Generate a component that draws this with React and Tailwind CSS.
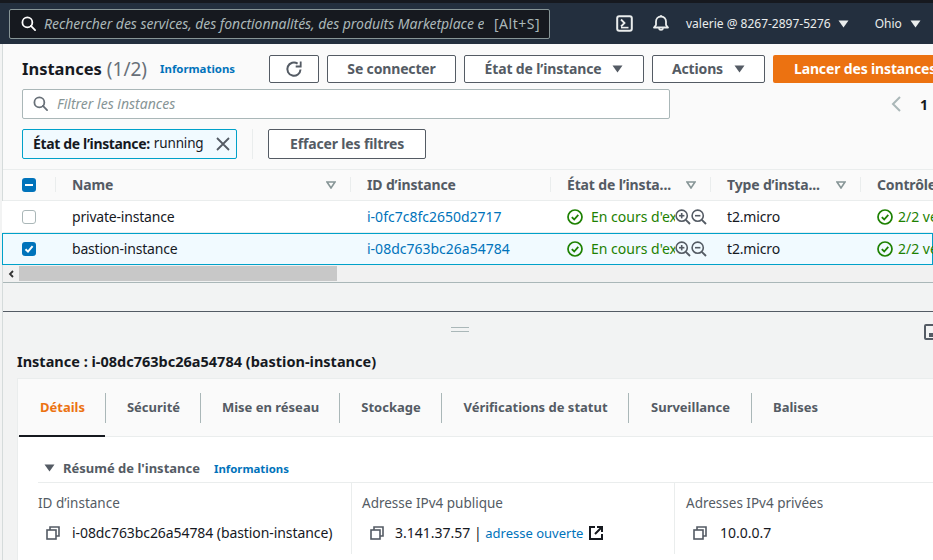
const F = { fontFamily: '"Noto Sans", sans-serif' };

function Caret({ className = "", color = "#545b64" }) {
  return (
    <svg width="11" height="8" viewBox="0 0 11 8" className={className}>
      <path d="M0.5 0.5h10L5.5 7.5z" fill={color} />
    </svg>
  );
}

function SortCaret() {
  return (
    <svg width="10" height="8" viewBox="0 0 10 8">
      <path d="M1 1h8L5 7z" fill="none" stroke="#879596" strokeWidth="1.6" />
    </svg>
  );
}

function Search({ size = 15, color = "#fff" }) {
  return (
    <svg width={size} height={size} viewBox="0 0 16 16" fill="none" stroke={color} strokeWidth="1.9">
      <circle cx="6.8" cy="6.8" r="5.3" />
      <path d="M10.6 10.6 15 15" strokeLinecap="round" />
    </svg>
  );
}

function Btn({ children, className = "" }) {
  return (
    <div className={`flex h-[28px] items-center justify-center rounded-[2px] border border-[#545b64] bg-white pb-px text-[14px] font-bold tracking-[-0.15px] text-[#545b64] ${className}`}>
      {children}
    </div>
  );
}

function CheckOk({ size = 16 }) {
  return (
    <svg width={size} height={size} viewBox="0 0 16 16" fill="none" stroke="#1d8102" strokeWidth="1.7" className="shrink-0">
      <circle cx="8" cy="8" r="7" />
      <path d="M4.8 8.2 7.2 10.5 11.3 5.9" strokeWidth="1.8" />
    </svg>
  );
}

function Zoom({ plus }) {
  return (
    <svg width="16" height="16" viewBox="0 0 16 16" fill="none" stroke="#545b64" strokeWidth="1.6" className="shrink-0">
      <circle cx="6.7" cy="6.7" r="5.6" />
      <path d="M10.8 10.8 15 15" strokeWidth="1.9" />
      <path d="M4 6.7h5.4" />
      {plus && <path d="M6.7 4v5.4" />}
    </svg>
  );
}

function Copy() {
  return (
    <svg width="14" height="14" viewBox="0 0 14 14" fill="none" stroke="#545b64" strokeWidth="1.6">
      <rect x="1" y="4" width="9" height="9" />
      <path d="M4 4V1h9v9h-3" />
    </svg>
  );
}

function Th({ w, label, sort, sep = true, pad = "pl-[16px]" }) {
  return (
    <div className={`relative flex h-full shrink-0 items-center justify-between pr-[15px] ${pad} ${w}`}>
      <span className="mb-[2px] whitespace-nowrap text-[14px] font-bold tracking-[-0.15px] text-[#545b64]">{label}</span>
      {sort && <SortCaret />}
      {sep && <span className="absolute right-0 top-[7px] h-[15px] w-px bg-[#eaeded]" />}
    </div>
  );
}

function Row({ selected, name, id }) {
  return (
    <div className={`-ml-px flex h-[32px] items-center border text-[14px] text-[#16191f] ${selected ? "border-[#00a1c9] bg-[#f1faff]" : "border-transparent border-b-[#eaeded] bg-white"}`}>
      <div className="flex w-[53px] shrink-0 items-center pl-[19px]">
        {selected ? (
          <span className="flex h-[14px] w-[14px] items-center justify-center rounded-[3px] bg-[#0073bb]">
            <svg width="10" height="10" viewBox="0 0 10 10" fill="none" stroke="#fff" strokeWidth="2"><path d="M1.5 5.2 4 7.6 8.6 2.2" /></svg>
          </span>
        ) : (
          <span className="h-[14px] w-[14px] rounded-[3px] border border-[#aab7b8] bg-white" />
        )}
      </div>
      <div className="mb-[2px] w-[295px] shrink-0 pl-[16px] tracking-[-0.2px]">{name}</div>
      <div className="mb-[2px] w-[200px] shrink-0 pl-[16px] text-[#0073bb]">{id}</div>
      <div className="flex w-[160px] shrink-0 items-center pl-[16px]">
        <CheckOk />
        <span className="mb-[2px] ml-[8px] w-[84px] shrink-0 overflow-hidden whitespace-nowrap text-[#1d8102]">En cours d'exécution</span>
        <Zoom plus />
        <Zoom />
      </div>
      <div className="mb-[2px] w-[150px] shrink-0 pl-[16px] tracking-[-0.15px]">t2.micro</div>
      <div className="flex shrink-0 items-center whitespace-nowrap pl-[16px] text-[#1d8102]">
        <CheckOk />
        <span className="mb-[2px] ml-[5px]">2/2 vérifications</span>
      </div>
    </div>
  );
}

function Tab({ children, active, sep = true, w }) {
  return (
    <div className={`relative flex h-full shrink-0 items-center justify-center text-[13px] font-bold ${w} ${active ? "text-[#ec7211]" : "text-[#545b64]"}`}>
      {children}
      {sep && <span className="absolute right-0 top-[14px] h-[30px] w-px bg-[#aab7b8]" />}
      {active && <span className="absolute bottom-[-1px] left-0 right-[1px] h-[2px] bg-[#16191f]" />}
    </div>
  );
}

function Cell({ label, w, pl = "", children }) {
  return (
    <div className={`h-[71px] shrink-0 ${w} ${pl ? "border-l border-[#eaeded]" : ""} ${pl}`}>
      <div className="mt-[10px] whitespace-nowrap text-[13.5px] leading-[20px] text-[#545b64]">{label}</div>
      <div className="mt-[10px] flex items-center text-[14px] leading-[20px] text-[#16191f]">{children}</div>
    </div>
  );
}

export default function App() {
  return (
    <div style={F} className="flex h-[560px] w-[933px] flex-col overflow-hidden bg-[#f2f3f3]">
      <div className="h-[3px] shrink-0 bg-[#16191f]" />
      <div className="flex h-[41px] shrink-0 items-center bg-[#232f3e] pl-[9px] text-[#eaeded]">
        <div className="flex h-[30px] w-[541px] shrink-0 items-center rounded-[2px] border border-[#879596] bg-[#16191f] pl-[11px] text-[14px] text-[#aab7b8]">
          <Search size={15} color="#fff" />
          <span className="ml-[8px] w-[440px] shrink-0 overflow-hidden whitespace-nowrap italic tracking-[-0.05px]">Rechercher des services, des fonctionnalités, des produits Marketplace et la documentation</span>
          <span className="ml-[10px] whitespace-nowrap tracking-[0.5px]">[Alt+S]</span>
        </div>
        <svg className="ml-[66px]" width="17" height="17" viewBox="0 0 17 17" fill="none" stroke="#eaeded" strokeWidth="2">
          <rect x="1.2" y="1.2" width="14.6" height="14.6" rx="2" />
          <path d="M5 4.5 8.5 8 5 11.5" strokeWidth="1.8" />
          <path d="M5 12.6h7.5" strokeWidth="1.6" />
        </svg>
        <svg className="ml-[20px]" width="16" height="17" viewBox="0 0 16 17" fill="none" stroke="#eaeded" strokeWidth="1.8">
          <path d="M1 12.5h14L13 10V6.5a5 5 0 0 0-10 0V10z" strokeLinejoin="round" />
          <path d="M5.8 13.2a2.3 2.3 0 0 0 4.4 0" />
          <path d="M8 .3v1.2" />
        </svg>
        <span className="ml-[17px] whitespace-nowrap text-[12px]">valerie @ 8267-2897-5276</span>
        <Caret className="ml-[7px]" color="#eaeded" />
        <span className="ml-[26px] whitespace-nowrap text-[12px]">Ohio</span>
        <Caret className="ml-[8px]" color="#eaeded" />
      </div>

      <div className="ml-[2px] flex h-[238px] shrink-0 flex-col border-l border-[#d5dbdb] bg-[#fafafa]">
        <div className="flex h-[126px] shrink-0 flex-col border-b border-[#eaeded] pl-[19px]">
          <div className="mt-[11px] flex h-[28px] items-center">
            <div className="flex w-[247px] shrink-0 items-center">
              <span className="text-[16.5px] font-bold text-[#16191f]">Instances</span>
              <span className="ml-[5px] text-[19px] text-[#687078]">(1/2)</span>
              <span className="ml-[13px] text-[11.4px] font-bold text-[#0073bb]">Informations</span>
            </div>
            <Btn className="w-[50px] shrink-0">
              <svg width="18" height="18" viewBox="0 0 18 18" fill="none" stroke="#545b64" strokeWidth="2">
                <path d="M15.5 9.5A6.6 6.6 0 1 1 12.6 3.7" />
                <path d="M15.7 1.5v5h-5" strokeWidth="1.8" />
              </svg>
            </Btn>
            <Btn className="ml-[8px] w-[129px] shrink-0">Se connecter</Btn>
            <Btn className="ml-[8px] w-[180px] shrink-0 gap-[11px]">État de l’instance <Caret /></Btn>
            <Btn className="ml-[8px] w-[113px] shrink-0 gap-[11px]">Actions <Caret /></Btn>
            <div className="ml-[8px] flex h-[28px] w-[170px] shrink-0 items-center justify-start whitespace-nowrap rounded-[2px] bg-[#ec7211] pb-px pl-[21px] text-[14px] font-bold tracking-[-0.15px] text-white">Lancer des instances</div>
          </div>
          <div className="mt-[6px] flex items-center">
            <div className="flex h-[30px] w-[648px] items-center rounded-[2px] border border-[#aab7b8] bg-white pb-px pl-[10px] text-[14px] italic text-[#879596]">
              <Search size={15} color="#687078" />
              <span className="ml-[9px]">Filtrer les instances</span>
            </div>
            <svg className="ml-[220px]" width="12" height="16" viewBox="0 0 12 16" fill="none" stroke="#aab7b8" strokeWidth="2">
              <path d="M10 1 3 8l7 7" />
            </svg>
            <span className="ml-[18px] text-[14px] font-bold text-[#16191f]">1</span>
          </div>
          <div className="mt-[10px] flex items-center">
            <div className="flex h-[30px] w-[215px] items-center whitespace-nowrap rounded-[2px] border border-[#00a1c9] bg-[#f1faff] pb-px pl-[10px] text-[14px] text-[#16191f]">
              <span className="font-bold tracking-[-0.35px]">État de l’instance:</span>
              <span className="ml-[4px] text-[13.5px] tracking-[-0.15px]">running</span>
              <svg className="ml-[12px]" width="14" height="14" viewBox="0 0 14 14" stroke="#545b64" strokeWidth="1.8"><path d="M1 1l12 12M13 1 1 13" /></svg>
            </div>
            <span className="ml-[15px] h-[30px] w-px bg-[#eaeded]" />
            <Btn className="ml-[15px] h-[30px] w-[158px]">Effacer les filtres</Btn>
          </div>
        </div>

        <div className="flex h-[31px] shrink-0 items-center border-b border-[#eaeded]">
          <div className="relative flex h-full w-[53px] shrink-0 items-center pl-[19px]">
            <span className="flex h-[14px] w-[14px] items-center justify-center rounded-[3px] bg-[#0073bb]">
              <span className="h-[2px] w-[8px] bg-white" />
            </span>
            <span className="absolute right-0 top-[7px] h-[15px] w-px bg-[#eaeded]" />
          </div>
          <Th w="w-[295px]" label="Name" sort />
          <Th w="w-[200px]" label="ID d’instance" />
          <Th w="w-[160px]" label="État de l’insta..." sort />
          <Th w="w-[150px]" label="Type d’insta..." sort />
          <Th w="w-[100px]" label="Contrôle" sep={false} />
        </div>
        <Row name="private-instance" id="i-0fc7c8fc2650d2717" />
        <Row selected name="bastion-instance" id="i-08dc763bc26a54784" />
        <div className="flex h-[17px] shrink-0 items-center bg-[#f1f1f1]">
          <svg className="ml-[5px]" width="6" height="8" viewBox="0 0 6 8" fill="none" stroke="#333" strokeWidth="1.8"><path d="M5 1 2 4l3 3" /></svg>
          <div className="ml-[5px] h-[15px] w-[318px] bg-[#c8c8c8]" />
        </div>
      </div>

      <div className="ml-[2px] flex min-h-0 flex-1 flex-col border-l border-[#d5dbdb]">
        <div className="h-[29px] shrink-0 border-t border-[#aab7b8] bg-[#f2f3f3]" />
        <div className="relative h-[67px] shrink-0 border-t border-[#545b64] bg-[#f2f3f3]">
          <span className="absolute left-[448px] top-[15px] h-[5px] w-[18px] border-y border-[#aab7b8]" />
          <svg className="absolute left-[921px] top-[12px]" width="16" height="16" viewBox="0 0 16 16" fill="none" stroke="#545b64" strokeWidth="2"><rect x="1" y="1" width="20" height="14" rx="1" /><path d="M5 11h12" strokeWidth="4" /></svg>
          <div className="absolute left-[14px] top-[39px] whitespace-nowrap text-[14.5px] font-bold text-[#16191f]">Instance : i-08dc763bc26a54784 (bastion-instance)</div>
        </div>
        <div className="ml-[14px] flex min-h-0 flex-1 flex-col border-l border-t border-[#eaeded] bg-white">
          <div className="flex h-[58px] shrink-0 border-b border-[#eaeded] bg-[#fafafa] pl-[1px]">
            <Tab active w="w-[87px]">Détails</Tab>
            <Tab w="w-[95px]">Sécurité</Tab>
            <Tab w="w-[139px]">Mise en réseau</Tab>
            <Tab w="w-[102px]">Stockage</Tab>
            <Tab w="w-[187px]">Vérifications de statut</Tab>
            <Tab w="w-[123px]">Surveillance</Tab>
            <Tab sep={false} w="w-[87px]">Balises</Tab>
          </div>
          <div className="ml-[20px] flex h-[46px] shrink-0 items-end border-b border-[#eaeded] pb-[4px]">
            <Caret className="mb-[6px] ml-[6px]" />
            <span className="ml-[8px] text-[13px] font-bold text-[#545b64]">Résumé de l'instance</span>
            <span className="ml-[14px] mb-[1px] text-[11.4px] font-bold text-[#0073bb]">Informations</span>
          </div>
          <div className="ml-[20px] flex">
            <Cell label="ID d’instance" w="w-[313px]">
              <span className="ml-[8px]"><Copy /></span>
              <span className="ml-[12px] whitespace-nowrap tracking-[-0.08px]">i-08dc763bc26a54784 (bastion-instance)</span>
            </Cell>
            <Cell label="Adresse IPv4 publique" w="w-[323px]" pl="pl-[10px]">
              <span className="ml-[8px]"><Copy /></span>
              <span className="ml-[11px] whitespace-nowrap">3.141.37.57 | <span className="text-[13px] text-[#0073bb]">adresse ouverte</span></span>
              <svg className="ml-[6px]" width="14" height="14" viewBox="0 0 14 14" fill="none" stroke="#16191f" strokeWidth="2"><path d="M6 1H1v12h12V8" /><path d="M8 1h5v5M13 1 6 8" /></svg>
            </Cell>
            <Cell label="Adresses IPv4 privées" w="w-[240px]" pl="pl-[11px]">
              <span className="ml-[7px]"><Copy /></span>
              <span className="ml-[13px]">10.0.0.7</span>
            </Cell>
          </div>
        </div>
      </div>
    </div>
  );
}
